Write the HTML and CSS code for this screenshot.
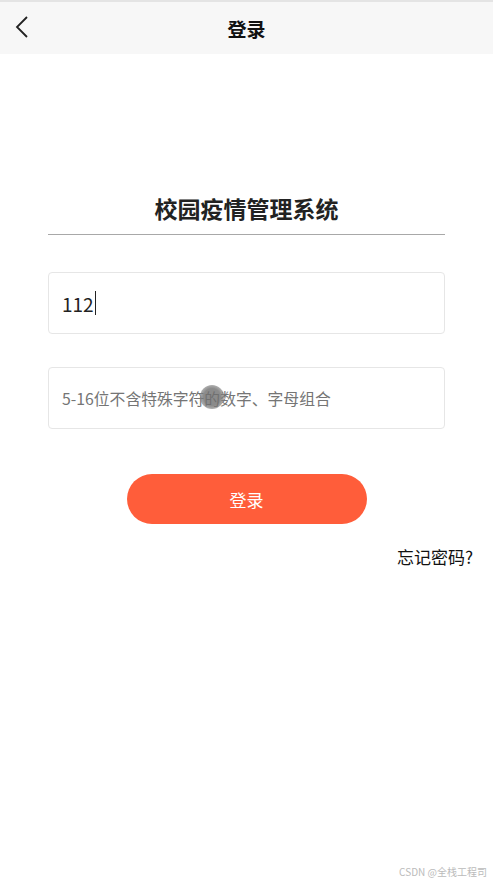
FILE: index.html
```html
<!DOCTYPE html>
<html lang="zh-CN">

<head>
    <meta charset="utf-8">
    <meta name="viewport" content="width=device-width, initial-scale=1">
    <title>登录</title>
    <link rel="stylesheet" href="styles.css">
</head>

<body>
    <!-- Top navigation bar -->
    <div class="nav-bar">
        <span class="nav-back">
            <svg width="14" height="22" viewBox="0 0 14 22">
                <path d="M12 1 L2 11 L12 21" fill="none" stroke="#222" stroke-width="1.8" />
            </svg>
        </span>
        <span class="nav-title">登录</span>
    </div>

    <div class="container">
        <h1 class="app-title">校园疫情管理系统</h1>

        <!-- Account input -->
        <div class="input-box">
            <span class="input-value">112</span><span class="caret"></span>
        </div>

        <!-- Password input -->
        <div class="input-box">
            <span class="placeholder">5-16位不含特殊字符的数字、字母组合</span>
            <span class="touch-dot"></span>
        </div>

        <button class="btn">登录</button>

        <div class="forgot">忘记密码?</div>
    </div>

    <div class="watermark">CSDN @全栈工程司</div>
</body>

</html>
```

FILE: styles.css
```css
body {
    margin: 0;
    padding: 0;
    background-color: #fff;
    color: #222;
    font-family: "Noto Sans CJK SC", "Noto Sans", sans-serif;
    width: 493px;
    height: 885px;
    position: relative;
    overflow: hidden;
}

.nav-bar {
    height: 52px;
    border-top: 2px solid #e4e4e4;
    background-color: #f7f7f7;
    display: flex;
    align-items: center;
    justify-content: center;
    position: relative;
}

.nav-back {
    position: absolute;
    left: 15px;
    top: 14px;
}

.nav-title {
    font-size: 19px;
    font-weight: bold;
    color: #111;
}

.container {
    padding: 0 48px;
}

.app-title {
    margin: 138px 0 0;
    font-size: 23px;
    font-weight: bold;
    color: #222;
    text-align: center;
    line-height: 32px;
    padding-bottom: 10px;
    border-bottom: 1px solid #a8a8a8;
}

.input-box {
    margin-top: 37px;
    height: 60px;
    border: 1px solid #e6e6e6;
    border-radius: 4px;
    display: flex;
    align-items: center;
    padding: 0 13px;
    position: relative;
}

.input-box + .input-box {
    margin-top: 33px;
}

.input-value {
    font-size: 19px;
    color: #222;
}

.caret {
    display: inline-block;
    width: 1px;
    height: 24px;
    background-color: #222;
    margin-left: 1px;
}

.placeholder {
    font-size: 15.8px;
    color: #757575;
}

.touch-dot {
    position: absolute;
    left: 151px;
    top: 17px;
    width: 24px;
    height: 24px;
    border-radius: 50%;
    background: radial-gradient(circle, rgba(110, 110, 110, 0.8) 50%, rgba(150, 150, 150, 0.6) 80%, rgba(200, 200, 200, 0.2) 100%);
}

.btn {
    display: block;
    margin: 45px auto 0;
    width: 240px;
    height: 50px;
    border: none;
    border-radius: 25px;
    background-color: #ff5d3a;
    color: #fff;
    font-size: 17px;
    font-family: inherit;
}

.forgot {
    text-align: right;
    margin: 20px -28px 0 0;
    font-size: 17px;
    color: #111;
}

.watermark {
    position: absolute;
    right: 6px;
    bottom: 6px;
    font-size: 10px;
    color: #bbb;
}
```
